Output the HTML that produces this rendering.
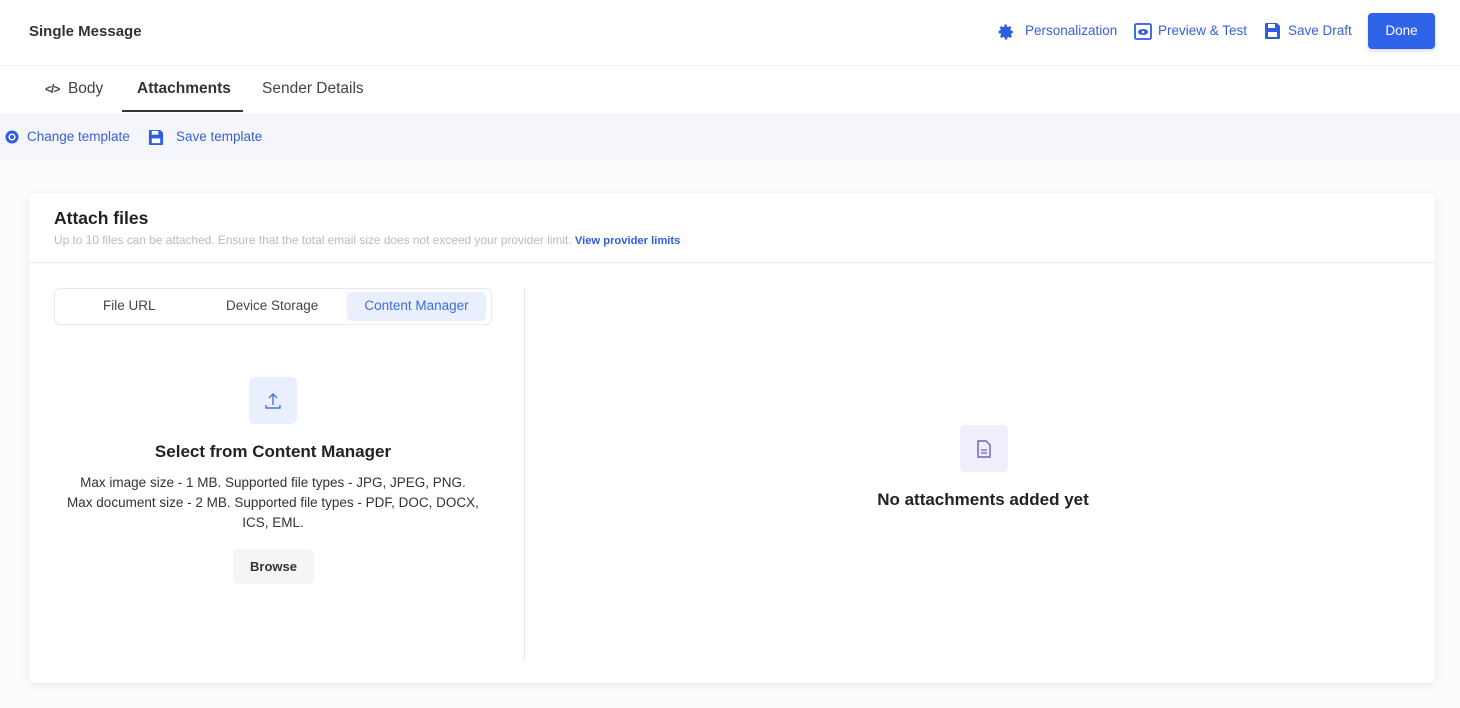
<!DOCTYPE html><html><head><style>
*{box-sizing:border-box;margin:0;padding:0}
body{width:1460px;height:708px;overflow:hidden;background:#fcfcfd;font-family:"Liberation Sans",sans-serif;color:#222;position:relative}
.a{position:absolute}
.blue{color:#3a5fd9}
</style></head><body>
<div class="a" style="left:0;top:0;width:1460px;height:66px;background:#fff;border-bottom:1px solid #f0f0f3"></div>
<div class="a" style="left:29px;top:23px;font-size:15px;font-weight:bold;color:#333">Single Message</div>
<svg class="a" style="left:997px;top:23px" width="18" height="18" viewBox="0 0 24 24"><path fill="#2f5de0" d="M12 8a4 4 0 100 8 4 4 0 000-8zm9 5.5v-3l-2.6-.5-.7-1.7 1.5-2.2-2.1-2.1-2.2 1.5-1.7-.7L13 2h-3l-.5 2.8-1.7.7-2.2-1.5-2.1 2.1 1.5 2.2-.7 1.7L2 10.5v3l2.8.5.7 1.7-1.5 2.2 2.1 2.1 2.2-1.5 1.700.7.5 2.8h3l.5-2.8 1.7-.7 2.2 1.5 2.1-2.1-1.5-2.2.7-1.7z"/></svg>
<div class="a blue" style="left:1025px;top:23px;font-size:13.5px">Personalization</div>
<svg class="a" style="left:1134px;top:23px" width="18" height="17" viewBox="0 0 18 17"><rect x="1" y="1" width="16" height="15" rx="1.5" fill="none" stroke="#2f5de0" stroke-width="1.8"/><ellipse cx="9" cy="9" rx="5" ry="3" fill="#2f5de0"/><circle cx="9" cy="9" r="1.3" fill="#fff"/></svg>
<div class="a blue" style="left:1158px;top:23px;font-size:13.5px">Preview &amp; Test</div>
<svg class="a" style="left:1264px;top:22px" width="17" height="18" viewBox="0 0 17 18"><path d="M1 2a1 1 0 011-1h11l3 3v12a1 1 0 01-1 1H2a1 1 0 01-1-1z" fill="#2f5de0"/><rect x="4" y="2" width="7" height="4" fill="#fff"/><rect x="4" y="10" width="9" height="5" fill="#fff"/></svg>
<div class="a blue" style="left:1288px;top:23px;font-size:13.5px">Save Draft</div>
<div class="a" style="left:1368px;top:13px;width:67px;height:36px;background:#2f63ea;border-radius:4px;color:#fff;font-size:13.5px;line-height:36px;text-align:center;box-shadow:0 2px 4px rgba(0,0,0,.15)">Done</div>
<div class="a" style="left:0;top:67px;width:1460px;height:46px;background:#fff"></div>
<div class="a" style="left:45px;top:80px;font-size:15.5px;color:#444"><b style="font-size:12px;letter-spacing:-1px">&lt;/&gt;</b>&nbsp; Body</div>
<div class="a" style="left:137px;top:80px;font-size:15.5px;font-weight:bold;color:#333">Attachments</div>
<div class="a" style="left:122px;top:110px;width:121px;height:2px;background:#333"></div>
<div class="a" style="left:262px;top:80px;font-size:15.5px;color:#444">Sender Details</div>
<div class="a" style="left:0;top:113px;width:1460px;height:47px;background:#f5f6fb"></div>
<svg class="a" style="left:5px;top:130px" width="14" height="14"><circle cx="7" cy="7" r="6.5" fill="#2f5de0"/><circle cx="7" cy="7" r="2.8" fill="none" stroke="#fff" stroke-width="1.5"/></svg>
<div class="a blue" style="left:27px;top:129px;font-size:13.5px">Change template</div>
<svg class="a" style="left:148px;top:129px" width="16" height="17" viewBox="0 0 17 18"><path d="M1 2a1 1 0 011-1h11l3 3v12a1 1 0 01-1 1H2a1 1 0 01-1-1z" fill="#2f5de0"/><rect x="4" y="2" width="7" height="4" fill="#fff"/><rect x="4" y="10" width="9" height="5" fill="#fff"/></svg>
<div class="a blue" style="left:176px;top:129px;font-size:13.5px">Save template</div>
<div class="a" style="left:29px;top:193px;width:1406px;height:490px;background:#fff;border-radius:6px;box-shadow:0 2px 10px rgba(0,0,0,.08)"></div>
<div class="a" style="left:54px;top:208px;font-size:17.5px;font-weight:bold;color:#222">Attach files</div>
<div class="a" style="left:54px;top:233px;font-size:11.9px;color:#bbb">Up to 10 files can be attached. Ensure that the total email size does not exceed your provider limit. <b style="color:#2f5de0;font-size:11.2px">View provider limits</b></div>
<div class="a" style="left:29px;top:262px;width:1406px;height:1px;background:#e6e8f0"></div>
<div class="a" style="left:524px;top:288px;width:1px;height:372px;background:#e6e8f0"></div>
<div class="a" style="left:54px;top:288px;width:438px;height:37px;border:1px solid #e8e9ef;border-radius:6px"></div>
<div class="a" style="left:103px;top:298px;font-size:13.5px;color:#444">File URL</div>
<div class="a" style="left:226px;top:298px;font-size:13.5px;color:#444">Device Storage</div>
<div class="a" style="left:347px;top:292px;width:139px;height:29px;background:#e9effc;border-radius:5px;color:#3a6de0;font-size:13.5px;line-height:28px;text-align:center">Content Manager</div>
<div class="a" style="left:249px;top:377px;width:48px;height:47px;background:#e9effc;border-radius:6px"></div>
<svg class="a" style="left:263px;top:391px" width="20" height="20"><path d="M10 3v11M6 7l4-4 4 4M3 14v3h14v-3" fill="none" stroke="#4a72d8" stroke-width="1.4"/></svg>
<div class="a" style="left:54px;top:442px;width:438px;text-align:center;font-size:17px;font-weight:bold">Select from Content Manager</div>
<div class="a" style="left:44px;top:473px;width:458px;text-align:center;font-size:13.5px;line-height:20px;color:#333">Max image size - 1 MB. Supported file types - JPG, JPEG, PNG.<br>Max document size - 2 MB. Supported file types - PDF, DOC, DOCX,<br>ICS, EML.</div>
<div class="a" style="left:233px;top:549px;width:81px;height:35px;background:#f5f5f7;border-radius:5px;text-align:center;line-height:35px;font-size:13px;font-weight:bold;color:#333">Browse</div>
<div class="a" style="left:960px;top:425px;width:48px;height:47px;background:#f1edfb;border-radius:6px"></div>
<svg class="a" style="left:976px;top:440px" width="16" height="18"><path d="M2 1h8l4 4v12H2z" fill="none" stroke="#6b5fc4" stroke-width="1.4"/><path d="M5 10h6M5 13h6" stroke="#6b5fc4" stroke-width="1.3"/></svg>
<div class="a" style="left:700px;top:490px;width:566px;text-align:center;font-size:17px;font-weight:bold">No attachments added yet</div>
</body></html>
